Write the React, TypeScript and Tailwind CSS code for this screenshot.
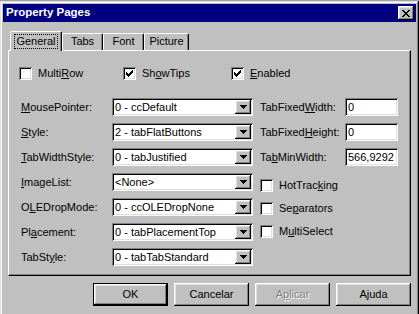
import React from "react";

const raised =
  "shadow-[inset_-1px_-1px_#000,inset_1px_1px_#fff,inset_-2px_-2px_#808080,inset_2px_2px_#dfdfdf]";
const sunken =
  "shadow-[inset_1px_1px_#808080,inset_-1px_-1px_#fff,inset_2px_2px_#000,inset_-2px_-2px_#dfdfdf]";

function Lbl({ pre = "", u = "", post = "" }: { pre?: string; u?: string; post?: string }) {
  return (
    <span className="whitespace-nowrap">
      {pre}
      {u && <u className="underline-offset-[1px]">{u}</u>}
      {post}
    </span>
  );
}

function CheckMark() {
  // classic 7x7 bitmap check, one 1x3 column per x
  const tops = [2, 3, 4, 3, 2, 1, 0];
  return (
    <svg width="7" height="7" viewBox="0 0 7 7" shapeRendering="crispEdges">
      {tops.map((t, i) => (
        <rect key={i} x={i} y={t} width="1" height="3" fill="#000" />
      ))}
    </svg>
  );
}

function CheckBox({ checked, children }: { checked?: boolean; children: React.ReactNode }) {
  return (
    <div className="flex items-center gap-[6px] h-[13px]">
      <div className={`w-[13px] h-[13px] shrink-0 bg-white flex items-center justify-center ${sunken}`}>
        {checked && <CheckMark />}
      </div>
      {children}
    </div>
  );
}

function Combo({ value }: { value: string }) {
  return (
    <div className={`flex h-[18px] w-[141px] bg-white p-[2px] ${sunken}`}>
      <div className="flex-1 pl-[1px] leading-[14px] whitespace-nowrap overflow-hidden">{value}</div>
      <div className={`w-[16px] h-[14px] bg-[#c0c0c0] flex items-center justify-center ${raised}`}>
        <svg width="7" height="4" viewBox="0 0 7 4" shapeRendering="crispEdges">
          <path d="M0 0h7v1h-1v1h-1v1h-1v1h-1v-1h-1v-1h-1v-1h-1z" fill="#000" />
        </svg>
      </div>
    </div>
  );
}

function TextBox({ value }: { value: string }) {
  return (
    <div className={`h-[18px] w-[53px] bg-white px-[3px] leading-[18px] whitespace-nowrap overflow-hidden ${sunken}`}>
      {value}
    </div>
  );
}

function Button({ children, def, disabled }: { children: React.ReactNode; def?: boolean; disabled?: boolean }) {
  return (
    <div className={`w-[75px] h-[23px] ${def ? "border border-black" : ""}`}>
      <div
        className={`h-full w-full flex items-center justify-center ${
          disabled ? "text-[#808080] [text-shadow:1px_1px_#fff]" : ""
        } ${raised}`}
      >
        {children}
      </div>
    </div>
  );
}

const leftRows: [React.ReactNode, string][] = [
  [<Lbl u="M" post="ousePointer:" />, "0 - ccDefault"],
  [<Lbl u="S" post="tyle:" />, "2 - tabFlatButtons"],
  [<Lbl u="T" post="abWidthStyle:" />, "0 - tabJustified"],
  [<Lbl u="I" post="mageList:" />, "<None>"],
  [<Lbl pre="O" u="L" post="EDropMode:" />, "0 - ccOLEDropNone"],
  [<Lbl pre="Pl" u="a" post="cement:" />, "0 - tabPlacementTop"],
  [<Lbl pre="TabSt" u="y" post="le:" />, "0 - tabTabStandard"],
];

const rightRows: [React.ReactNode, string][] = [
  [<Lbl pre="TabFixed" u="W" post="idth:" />, "0"],
  [<Lbl pre="TabFixed" u="H" post="eight:" />, "0"],
  [<Lbl pre="Ta" u="b" post="MinWidth:" />, "566,9292"],
];

const tabs = [
  { name: "General", w: "w-[41px]" },
  { name: "Tabs", w: "w-[41px]" },
  { name: "Font", w: "w-[41px]" },
  { name: "Picture", w: "w-[45px]" },
];

export default function App() {
  return (
    <div className="w-[419px] h-[314px] overflow-hidden bg-[#c0c0c0] text-[11px] text-black font-['Liberation_Sans',Arial,sans-serif]">
      <div className="h-[1px] bg-[#a0a0a0]" />
      <div className={`w-[419px] h-[340px] p-[3px] bg-[#c0c0c0] shadow-[inset_-1px_-1px_#000,inset_1px_1px_#dfdfdf,inset_-2px_-2px_#808080,inset_2px_2px_#fff]`}>
        {/* title bar */}
        <div className="h-[18px] bg-[#000080] flex items-center justify-between pl-[3px] pr-[2px]">
          <span className="text-white font-bold text-[11.5px] leading-none">Property Pages</span>
          <div className={`w-[16px] h-[14px] bg-[#c0c0c0] flex items-center justify-center ${raised}`}>
            <svg width="8" height="7" viewBox="0 0 8 7" shapeRendering="crispEdges">
              <path
                d="M0 0h2v1h1v1h2v-1h1v-1h2v1h-1v1h-1v1h-1v1h1v1h1v1h1v1h-2v-1h-1v-1h-2v1h-1v1h-2v-1h1v-1h1v-1h1v-1h-1v-1h-1v-1h-1z"
                fill="#000"
              />
            </svg>
          </div>
        </div>

        <div className="pl-[5px] pt-[9px]">
          {/* tab strip */}
          <div className="flex items-end h-[19px] pl-[2px]">
            <div className="relative z-10 mb-[-1px] h-[20px] w-[52px] bg-[#c0c0c0] border-l border-t border-white border-r border-r-black shadow-[inset_-1px_0_#808080] rounded-tl-[2px] rounded-tr-[2px] flex items-start justify-center pt-[2px]">
              <span className="border border-dotted border-black px-[1px] leading-[13px]">General</span>
            </div>
            {tabs.slice(1).map((t) => (
              <div
                key={t.name}
                className={`${t.w} h-[17px] border-l border-t border-white border-r border-r-black shadow-[inset_-1px_0_#808080] rounded-tl-[2px] rounded-tr-[2px] flex items-center justify-center pb-[1px]`}
              >
                {t.name}
              </div>
            ))}
          </div>

          {/* panel */}
          <div className="w-[403px] h-[226px] border-l border-t border-white border-r border-b border-r-black border-b-black shadow-[inset_-1px_-1px_#808080] pt-[16px]">
            <div className="flex pl-[10px]">
              <div className="w-[104px]">
                <CheckBox>
                  <Lbl pre="Multi" u="R" post="ow" />
                </CheckBox>
              </div>
              <div className="w-[108px]">
                <CheckBox checked>
                  <Lbl pre="Sh" u="o" post="wTips" />
                </CheckBox>
              </div>
              <CheckBox checked>
                <Lbl u="E" post="nabled" />
              </CheckBox>
            </div>

            <div className="flex mt-[18px] pl-[12px]">
              <div className="flex flex-col gap-[7px]">
                {leftRows.map(([l, v], i) => (
                  <div key={i} className="flex items-center h-[18px]">
                    <div className="w-[91px]">{l}</div>
                    <Combo value={v} />
                  </div>
                ))}
              </div>

              <div className="flex flex-col ml-[7px]">
                <div className="flex flex-col gap-[7px]">
                  {rightRows.map(([l, v], i) => (
                    <div key={i} className="flex items-center h-[18px]">
                      <div className="w-[85px]">{l}</div>
                      <TextBox value={v} />
                    </div>
                  ))}
                </div>
                <div className="flex flex-col gap-[10px] mt-[13px]">
                  <CheckBox>
                    <Lbl pre="HotTrac" u="k" post="ing" />
                  </CheckBox>
                  <CheckBox>
                    <Lbl pre="Se" u="p" post="arators" />
                  </CheckBox>
                  <CheckBox>
                    <Lbl pre="M" u="u" post="ltiSelect" />
                  </CheckBox>
                </div>
              </div>
            </div>
          </div>

          {/* buttons */}
          <div className="w-[403px] flex justify-end gap-[6px] mt-[7px]">
            <Button def>OK</Button>
            <Button>Cancelar</Button>
            <Button disabled>
              <Lbl pre="A" u="p" post="licar" />
            </Button>
            <Button>Ajuda</Button>
          </div>
        </div>
      </div>
    </div>
  );
}
